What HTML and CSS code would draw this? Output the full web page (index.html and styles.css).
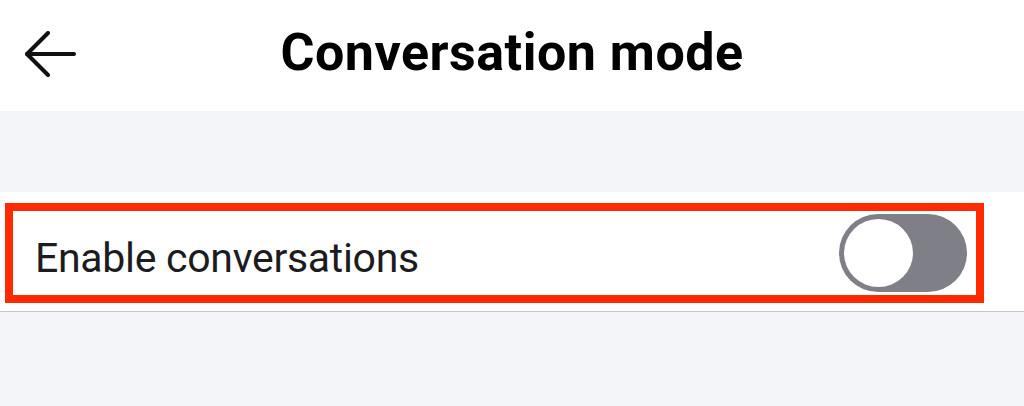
FILE: index.html
```html
<!DOCTYPE html>
<html lang="en">
<head>
<meta charset="utf-8">
<title>Conversation mode</title>
<link rel="stylesheet" href="styles.css">
</head>
<body>
  <header class="topbar">
    <button class="back" aria-label="Back">
      <svg width="52" height="46" viewBox="0 0 52 46" fill="none" stroke="#111" stroke-width="4" stroke-linecap="round" stroke-linejoin="round">
        <path d="M2 23 H49"/>
        <path d="M23 2 L2 23 L23 44"/>
      </svg>
    </button>
    <h1 class="title">Conversation mode</h1>
  </header>
  <div class="spacer"></div>
  <section class="group">
    <div class="row highlight">
      <span class="label">Enable conversations</span>
      <span class="toggle" role="switch" aria-checked="false"><span class="knob"></span></span>
    </div>
  </section>
</body>
</html>
```
FILE: styles.css
```css
* { box-sizing: border-box; }
html, body { margin: 0; padding: 0; }
body {
  background: #f4f5f9;
  font-family: Roboto, "Liberation Sans", Arial, sans-serif;
  width: 1024px;
  height: 406px;
  overflow: hidden;
}
.topbar {
  position: relative;
  height: 111px;
  background: #ffffff;
  display: flex;
  align-items: center;
  justify-content: center;
}
.back {
  position: absolute;
  left: 25px;
  top: 31px;
  padding: 0;
  border: 0;
  background: none;
  display: flex;
}
.title {
  margin: 0;
  font-size: 52px;
  font-weight: 700;
  color: #000;
  line-height: 1;
  padding-bottom: 6px;
  letter-spacing: 0.5px;
}
.spacer { height: 81px; }
.group {
  background: #fff;
  height: 120px;
  border-bottom: 1px solid #c6c6c8;
  padding: 11px 40px 0 5px;
}
.row {
  height: 100px;
  display: flex;
  align-items: center;
  justify-content: space-between;
  padding: 0 9px 0 22px;
}
.highlight { border: 8px solid #ff2a00; }
.label {
  font-size: 41px;
  color: #1c1c1e;
  line-height: 1;
  padding-top: 10px;
  letter-spacing: -0.3px;
}
.toggle {
  width: 128px;
  height: 78px;
  border-radius: 39px;
  background: #7e7f87;
  padding: 5px;
  display: flex;
}
.knob {
  width: 69px;
  height: 68px;
  border-radius: 50%;
  background: #fff;
}
```
